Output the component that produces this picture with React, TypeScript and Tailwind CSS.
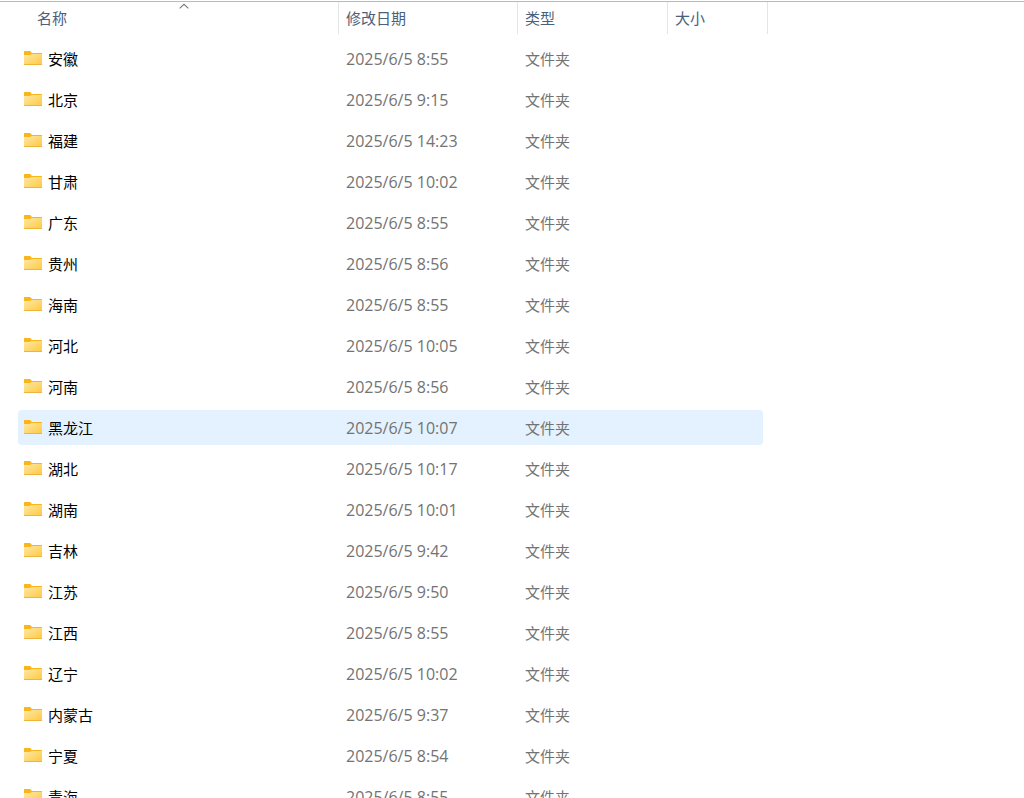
type Folder = { name: string; modified: string };

const folders: Folder[] = [
  { name: "安徽", modified: "2025/6/5 8:55" },
  { name: "北京", modified: "2025/6/5 9:15" },
  { name: "福建", modified: "2025/6/5 14:23" },
  { name: "甘肃", modified: "2025/6/5 10:02" },
  { name: "广东", modified: "2025/6/5 8:55" },
  { name: "贵州", modified: "2025/6/5 8:56" },
  { name: "海南", modified: "2025/6/5 8:55" },
  { name: "河北", modified: "2025/6/5 10:05" },
  { name: "河南", modified: "2025/6/5 8:56" },
  { name: "黑龙江", modified: "2025/6/5 10:07" },
  { name: "湖北", modified: "2025/6/5 10:17" },
  { name: "湖南", modified: "2025/6/5 10:01" },
  { name: "吉林", modified: "2025/6/5 9:42" },
  { name: "江苏", modified: "2025/6/5 9:50" },
  { name: "江西", modified: "2025/6/5 8:55" },
  { name: "辽宁", modified: "2025/6/5 10:02" },
  { name: "内蒙古", modified: "2025/6/5 9:37" },
  { name: "宁夏", modified: "2025/6/5 8:54" },
  { name: "青海", modified: "2025/6/5 8:55" },
];

const highlighted = "黑龙江";

function FolderIcon() {
  return (
    <svg width="18" height="15" viewBox="0 0 18 15" className="shrink-0" aria-hidden="true">
      <defs>
        <linearGradient id="folder-front" x1="0" y1="0" x2="1" y2="1">
          <stop offset="0" stopColor="#ffe7a6" />
          <stop offset="1" stopColor="#fec93f" />
        </linearGradient>
      </defs>
      <path d="M0 .5Q0 0 .5 0H6Q6.5 0 6.8 .4L7.9 2H17.5Q18 2 18 2.5V8H0Z" fill="#fab619" />
      <path d="M0 4H5.8Q6.3 4 6.7 3.6L7.2 3.2Q7.5 3 8 3H18V13.5Q18 14 17.5 14H.5Q0 14 0 13.5Z" fill="url(#folder-front)" />
      <path d="M0 13H18V13.5Q18 14 17.5 14H.5Q0 14 0 13.5Z" fill="#edb440" />
    </svg>
  );
}

function HeaderCell({ label, sorted = false }: { label: string; sorted?: boolean }) {
  return (
    <th scope="col" aria-sort={sorted ? "ascending" : undefined} className="p-0 align-top font-normal">
      <button
        type="button"
        className={`relative flex h-8 w-full items-center border-r border-[#e5e5e5] text-left text-[#4c607a] ${sorted ? "pl-[19px]" : "pl-[7px]"}`}
      >
        {label}
        {sorted && (
          <svg width="10" height="6" viewBox="0 0 10 6" className="absolute top-px left-[161px]" aria-hidden="true">
            <path d="M.7 5.3L5 1.3L9.3 5.3" fill="none" stroke="#777" strokeWidth="1.1" />
          </svg>
        )}
      </button>
    </th>
  );
}

function FolderRow({ folder }: { folder: Folder }) {
  const fill = folder.name === highlighted ? "bg-[#e3f2fe]" : "";
  return (
    <tr>
      <td className="px-0 py-[3px]">
        <div className={`flex h-[35px] items-center gap-1.5 rounded-l-sm pl-1.5 text-black ${fill}`}>
          <FolderIcon />
          <span className="pt-px">{folder.name}</span>
        </div>
      </td>
      <td className="px-0 py-[3px]">
        <div className={`flex h-[35px] items-center pl-[7px] text-base text-[#737373] ${fill}`}>{folder.modified}</div>
      </td>
      <td className="px-0 py-[3px]">
        <div className={`flex h-[35px] items-center pt-px pl-[7px] text-[#737373] ${fill}`}>文件夹</div>
      </td>
      <td className="py-[3px] pr-[5px] pl-0">
        <div className={`h-[35px] rounded-r-sm ${fill}`} />
      </td>
    </tr>
  );
}

export default function App() {
  return (
    <main className="h-screen overflow-hidden bg-white pt-px font-['Open_Sans','Noto_Sans_CJK_SC',sans-serif] text-[15px]" lang="zh-CN">
      <div className="border-t border-[#b9bbba] pl-[18px]">
        <table className="w-[750px] table-fixed border-collapse">
          <colgroup>
            <col className="w-[321px]" />
            <col className="w-[179px]" />
            <col className="w-[150px]" />
            <col className="w-[100px]" />
          </colgroup>
          <thead>
            <tr className="h-9">
              <HeaderCell label="名称" sorted />
              <HeaderCell label="修改日期" />
              <HeaderCell label="类型" />
              <HeaderCell label="大小" />
            </tr>
          </thead>
          <tbody>
            {folders.map((folder) => (
              <FolderRow key={folder.name} folder={folder} />
            ))}
          </tbody>
        </table>
      </div>
    </main>
  );
}
